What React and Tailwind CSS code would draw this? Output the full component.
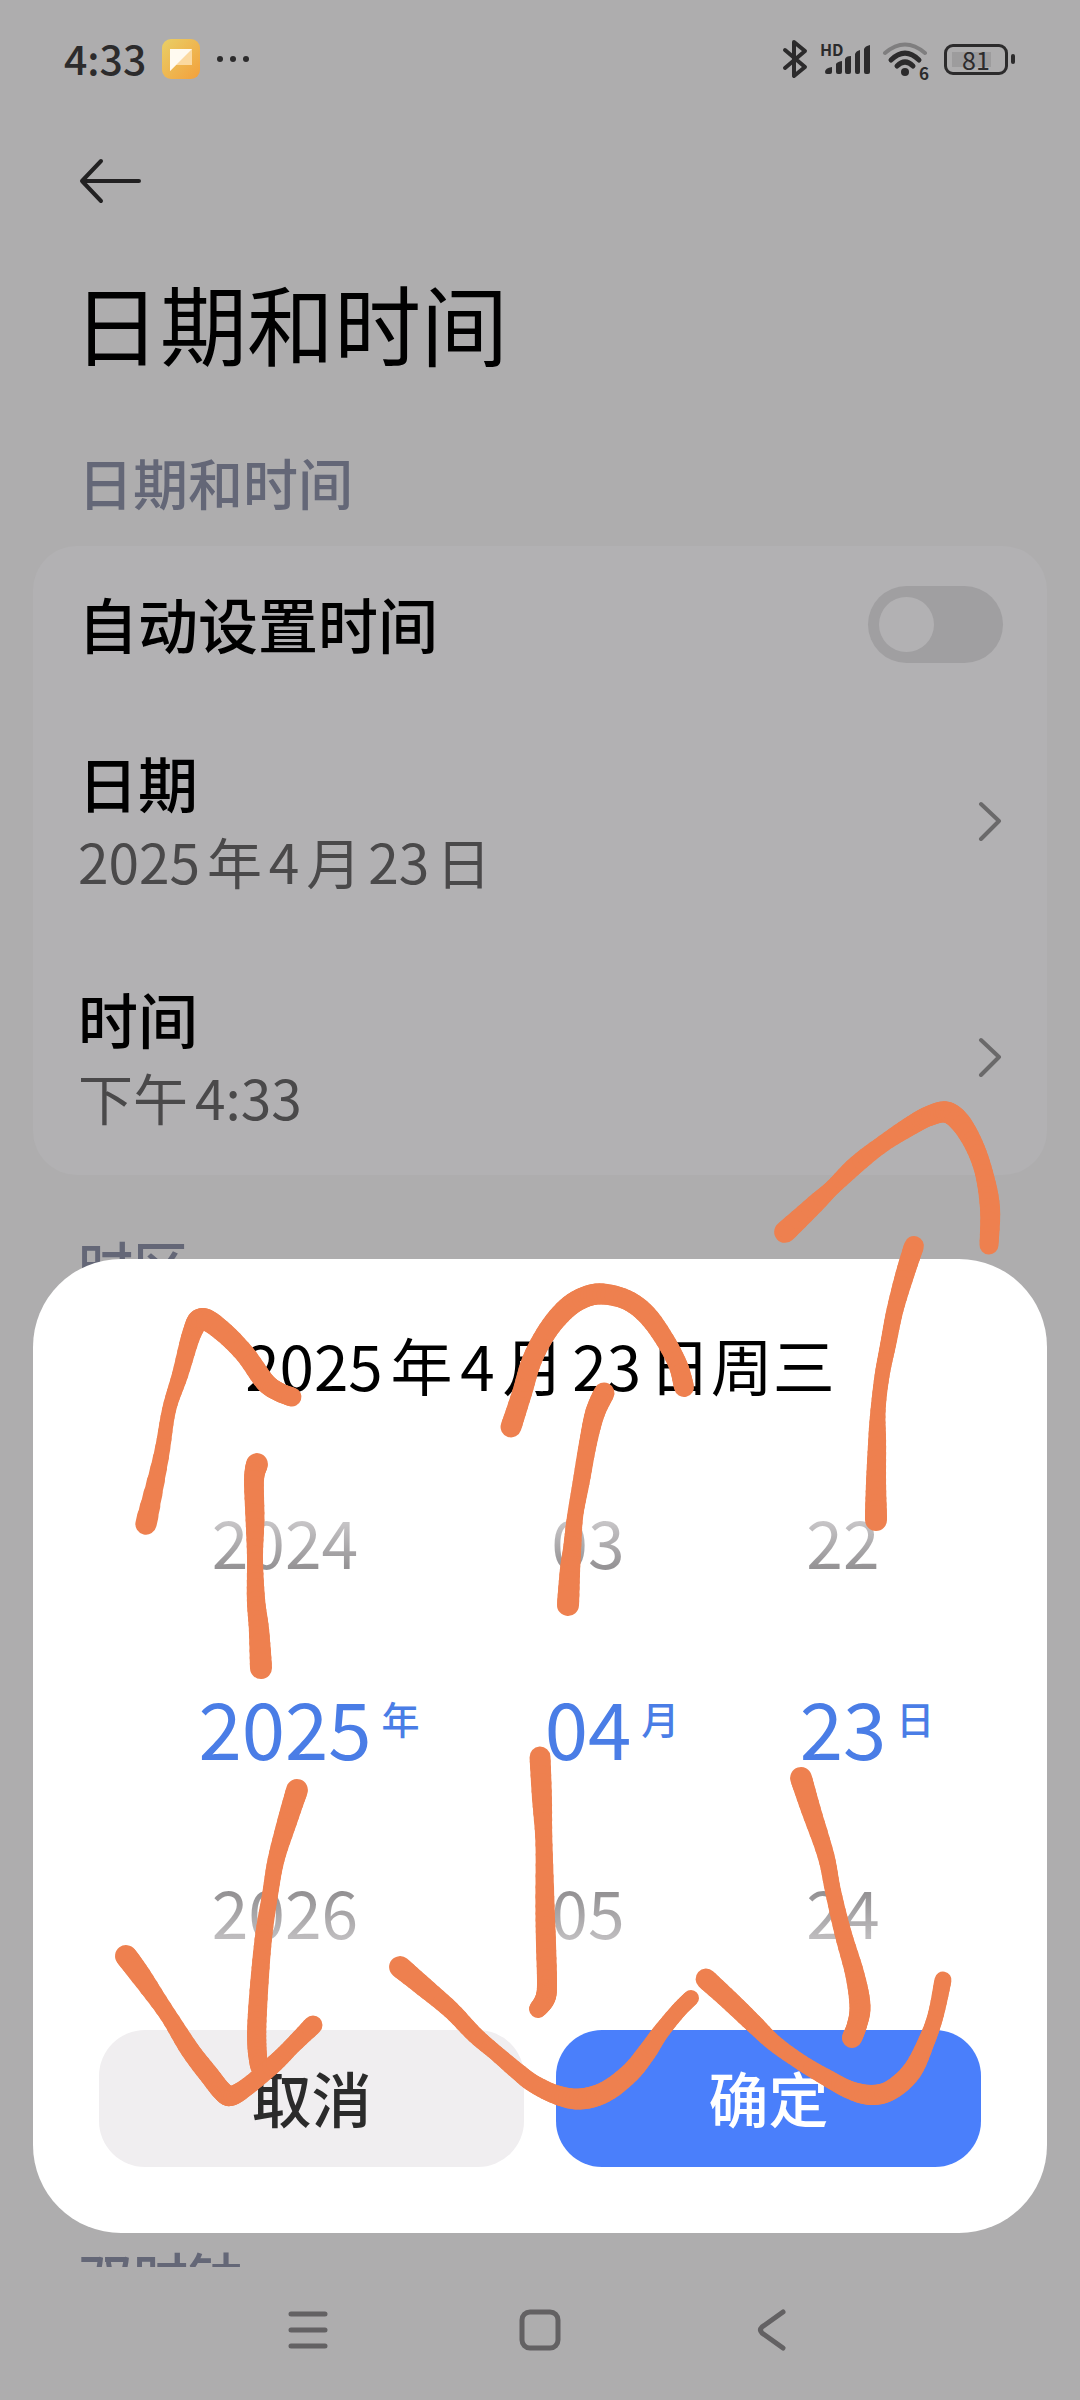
import React, { useState } from 'react';

const WEEKDAYS = ['日', '一', '二', '三', '四', '五', '六'];

// Hand-drawn swipe hints, each point is [x, y, pen width]
const PEN_STROKES = [
    [[146, 1524, 22], [161, 1457, 16], [169, 1410, 14], [180, 1375, 16], [192, 1333, 19], [202, 1319, 22], [221, 1330, 21], [245, 1354, 20], [265, 1382, 20], [279, 1392, 19], [292, 1397, 19]],
    [[257, 1464, 22], [254, 1480, 20], [255, 1520, 19], [255, 1560, 16], [256, 1600, 18], [259, 1630, 20], [261, 1668, 22]],
    [[511, 1427, 21], [522, 1393, 20], [532, 1360, 20], [548, 1330, 20], [567, 1308, 21], [585, 1297, 21], [603, 1294, 21], [627, 1300, 20], [647, 1315, 20], [665, 1340, 19], [678, 1365, 19], [684, 1387, 20]],
    [[604, 1393, 21], [595, 1413, 20], [588, 1443, 18], [581, 1483, 17], [575, 1517, 16], [572, 1550, 18], [570, 1570, 20], [568, 1605, 22]],
    [[785, 1232, 22], [815, 1204, 19], [833, 1187, 16], [857, 1164, 18], [884, 1143, 17], [912, 1125, 19], [929, 1116, 20], [946, 1112, 21], [960, 1122, 21], [974, 1145, 19], [984, 1173, 18], [990, 1208, 20], [989, 1245, 19]],
    [[914, 1246, 20], [905, 1274, 19], [895, 1310, 17], [888, 1345, 16], [882, 1376, 15], [878, 1411, 15], [877, 1446, 18], [876, 1485, 20], [876, 1520, 22]],
    [[297, 1790, 22], [287, 1822, 20], [276, 1860, 17], [270, 1895, 16], [264, 1933, 17], [260, 1975, 18], [257, 2021, 19], [257, 2048, 19], [259, 2066, 18]],
    [[126, 1956, 22], [141, 1976, 21], [168, 2015, 17], [190, 2050, 19], [210, 2076, 20], [222, 2091, 20], [231, 2096, 20], [248, 2086, 18], [275, 2063, 18], [293, 2045, 17], [313, 2025, 19]],
    [[540, 1757, 21], [542, 1799, 20], [544, 1845, 17], [545, 1906, 19], [546, 1944, 20], [547, 1985, 20], [545, 1999, 20], [538, 2009, 18]],
    [[400, 1967, 22], [424, 1987, 20], [451, 2010, 18], [475, 2035, 17], [496, 2053, 16], [517, 2071, 17], [534, 2084, 18], [557, 2095, 19], [580, 2099, 21], [605, 2092, 21], [630, 2073, 20], [647, 2052, 19], [660, 2033, 17], [678, 2011, 16], [691, 1998, 16]],
    [[801, 1778, 22], [811, 1810, 20], [826, 1856, 17], [833, 1891, 16], [843, 1933, 17], [855, 1975, 19], [860, 2006, 21], [857, 2025, 20], [852, 2038, 20]],
    [[706, 1979, 21], [729, 2000, 20], [753, 2023, 19], [774, 2043, 17], [802, 2063, 16], [829, 2079, 17], [850, 2090, 18], [871, 2095, 20], [891, 2090, 20], [912, 2071, 20], [927, 2040, 17], [936, 2014, 16], [943, 1980, 17]],
];

// Catmull-Rom through the points so that both path and width stay smooth
function smooth(points, steps = 6) {
    const out = [];
    for (let i = 0; i < points.length - 1; i++) {
        const p0 = points[i - 1] || points[i];
        const p1 = points[i];
        const p2 = points[i + 1];
        const p3 = points[i + 2] || p2;
        for (let s = 0; s < steps; s++) {
            const t = s / steps;
            out.push(p1.map((_, k) =>
                0.5 * (2 * p1[k] + (p2[k] - p0[k]) * t +
                    (2 * p0[k] - 5 * p1[k] + 4 * p2[k] - p3[k]) * t * t +
                    (3 * p1[k] - p0[k] - 3 * p2[k] + p3[k]) * t * t * t)
            ));
        }
    }
    out.push(points[points.length - 1]);
    return out;
}

function PenStrokes() {
    return (
        <svg
            viewBox="0 0 1080 2400"
            className="absolute inset-0 w-full h-full pointer-events-none"
            stroke="#ee804f"
            strokeLinecap="round"
            aria-hidden="true"
        >
            {PEN_STROKES.map((points, i) => {
                const path = smooth(points);
                return (
                    <g key={i}>
                        {path.slice(1).map(([x, y, w], j) => (
                            <line key={j} x1={path[j][0]} y1={path[j][1]} x2={x} y2={y} strokeWidth={w} />
                        ))}
                    </g>
                );
            })}
        </svg>
    );
}

function StatusBar() {
    return (
        <header className="h-[118px] shrink-0 pl-16 pr-[65px] flex items-center justify-between text-[#2c2b2c]">
            <div className="flex items-center">
                <span className="pb-1 text-[41px] leading-none font-medium">4:33</span>
                <svg width="38" height="40" viewBox="0 0 38 40" className="ml-4">
                    <defs>
                        <linearGradient id="note" x1="0" y1="0" x2="1" y2="1">
                            <stop offset="0" stopColor="#e9cf66" />
                            <stop offset="1" stopColor="#f3a03c" />
                        </linearGradient>
                    </defs>
                    <rect width="38" height="40" rx="9" fill="url(#note)" />
                    <path d="M8 10H30V26H14L8 32Z" fill="#fbd9a0" />
                    <path d="M8 10H30L8 32Z" fill="#fffaf0" />
                </svg>
                <svg width="34" height="8" viewBox="0 0 34 8" className="ml-4" fill="currentColor">
                    <circle cx="4" cy="4" r="3" />
                    <circle cx="17" cy="4" r="3" />
                    <circle cx="30" cy="4" r="3" />
                </svg>
            </div>
            <div className="flex items-center gap-3">
                <svg width="26" height="40" viewBox="0 0 26 40" fill="none" stroke="currentColor" strokeWidth="4" strokeLinecap="round" strokeLinejoin="round">
                    <path d="M3 11L23 28L12 37V3L23 12L3 29" />
                </svg>
                <div className="relative">
                    <svg width="50" height="36" viewBox="0 0 50 36" fill="currentColor">
                        <path d="M5 31Q5 27 12 26V31Q12 33 10 33H7Q5 33 5 31Z" />
                        <path d="M16 23Q17 21 22 20V31Q22 33 20 33H18Q16 33 16 31Z" />
                        <path d="M25 18Q26 15 31 15V31Q31 33 29 33H27Q25 33 25 31Z" />
                        <path d="M35 13Q36 10 40 9V31Q40 33 38 33H37Q35 33 35 31Z" />
                        <path d="M44 8Q45 5 50 4V31Q50 33 48 33H46Q44 33 44 31Z" />
                    </svg>
                    <span className="absolute left-0 top-0 text-[16px] leading-none font-bold">HD</span>
                </div>
                <div className="relative mr-[3px]">
                    <svg width="47" height="36" viewBox="0 0 47 36" fill="none" stroke="currentColor" strokeWidth="5" strokeLinecap="round">
                        <path d="M3 12Q23 -5 43 12" stroke="#7f7e7f" strokeWidth="4" />
                        <path d="M9 19Q23 5 37 19" />
                        <path d="M15 25Q23 17 31 25" />
                        <circle cx="23" cy="31" r="4" fill="currentColor" stroke="none" />
                    </svg>
                    <span className="absolute right-0 -bottom-1 text-[17px] leading-none font-bold">6</span>
                </div>
                <div className="flex items-center gap-[3px]">
                    <div className="w-16 h-[31px] rounded-[9px] border-3 border-current p-[5px]">
                        <div className="h-full flex items-center justify-center bg-linear-to-r from-[#9d9c9d] from-81% to-transparent to-81% text-[25px] leading-none">
                            81
                        </div>
                    </div>
                    <div className="w-1 h-[10px] rounded-sm bg-current" />
                </div>
            </div>
        </header>
    );
}

function SectionLabel({ children }) {
    return (
        <h2 className="pt-6 pl-[45px] text-[55px] leading-[130px] text-[#646777] font-medium">{children}</h2>
    );
}

function LinkRow({ title, value }) {
    return (
        <button type="button" className="w-full h-[236px] pl-[45px] pr-11 flex items-center justify-between text-left">
            <span>
                <span className="block text-[60px] leading-[79px] font-medium text-black">{title}</span>
                <span className="block text-[55px] leading-[79px] text-[#4a494a]">{value}</span>
            </span>
            <svg width="25" height="40" viewBox="0 0 25 40" fill="none" stroke="#6a696a" strokeWidth="4" strokeLinecap="round" strokeLinejoin="round">
                <path d="M3 3L21 20L3 38" />
            </svg>
        </button>
    );
}

function Wheel({ label, unit, value, format, onStep }) {
    return (
        <div role="group" aria-label={label} className="flex flex-col items-center">
            <button
                type="button"
                onClick={() => onStep(-1)}
                className="h-[185px] text-[66px] leading-[92px] bg-linear-to-b from-[#c8c6c8] from-40% to-[#959395] to-65% bg-clip-text text-transparent"
            >
                {format(value - 1)}
            </button>
            <div className="relative h-[185px] pt-1 flex items-center text-[78px] text-[#4a7de6]">
                {format(value)}
                <span className="absolute left-full top-12 ml-2.5 text-[38px] leading-[76px] font-medium">{unit}</span>
            </div>
            <button
                type="button"
                onClick={() => onStep(1)}
                className="h-[185px] text-[66px] leading-[92px] bg-linear-to-b from-[#929092] from-40% to-[#bebcbe] to-65% bg-clip-text text-transparent"
            >
                {format(value + 1)}
            </button>
        </div>
    );
}

function DateDialog() {
    const [date, setDate] = useState({ year: 2025, month: 4, day: 23 });

    const step = (key) => (delta) => setDate((d) => ({ ...d, [key]: d[key] + delta }));
    const pad = (max) => (n) => String(((n - 1 + max) % max) + 1).padStart(2, '0');

    const weekday = WEEKDAYS[new Date(date.year, date.month - 1, date.day).getDay()];
    const daysInMonth = new Date(date.year, date.month, 0).getDate();

    return (
        <div
            role="dialog"
            aria-labelledby="dialog-title"
            className="absolute inset-x-[33px] bottom-[167px] px-[66px] pb-[66px] bg-white rounded-[88px]"
        >
            <h2 id="dialog-title" className="pt-[55px] text-center text-[62px] leading-[100px] text-black">
                {date.year}年{date.month}月{date.day}日周{weekday}
            </h2>
            <div className="pt-[33px] pb-7 grid grid-cols-[372fr_234fr_276fr]">
                <Wheel label="年" unit="年" value={date.year} format={String} onStep={step('year')} />
                <Wheel label="月" unit="月" value={date.month} format={pad(12)} onStep={step('month')} />
                <Wheel label="日" unit="日" value={date.day} format={pad(daysInMonth)} onStep={step('day')} />
            </div>
            <div className="grid grid-cols-2 gap-8">
                <button type="button" className="h-[137px] pb-1 rounded-[46px] bg-[#f0eef0] text-[60px] font-medium text-[#2b2b2b]">
                    取消
                </button>
                <button type="button" className="h-[137px] pb-1 rounded-[46px] bg-[#4a7ffb] text-[60px] font-medium text-white">
                    确定
                </button>
            </div>
        </div>
    );
}

function NavBar() {
    return (
        <nav className="h-[133px] shrink-0 pb-2 flex items-center justify-center gap-[190px] text-[#636163]">
            <button type="button" aria-label="最近任务">
                <svg width="42" height="42" viewBox="0 0 42 42" stroke="currentColor" strokeWidth="5" strokeLinecap="round">
                    <path d="M4 5H38M4 21H38M4 37H38" />
                </svg>
            </button>
            <button type="button" aria-label="主屏幕">
                <svg width="42" height="42" viewBox="0 0 42 42" fill="none" stroke="currentColor" strokeWidth="5">
                    <rect x="3" y="3" width="36" height="36" rx="8" />
                </svg>
            </button>
            <button type="button" aria-label="返回">
                <svg width="42" height="42" viewBox="0 0 42 42" fill="none" stroke="currentColor" strokeWidth="5" strokeLinecap="round">
                    <path d="M32 3L11 18Q8 21 11 24L32 39" />
                </svg>
            </button>
        </nav>
    );
}

export default function App() {
    const [autoTime, setAutoTime] = useState(false);

    return (
        <div className="relative h-screen flex flex-col overflow-hidden bg-[#aeadae] font-['Noto_Sans_CJK_SC',sans-serif] [text-autospace:normal]">
            <StatusBar />
            <main className="flex-1 min-h-0 overflow-hidden px-[33px]">
                <div className="h-[126px] pl-[46px] flex items-center">
                    <button type="button" aria-label="返回">
                        <svg width="62" height="46" viewBox="0 0 62 46" fill="none" stroke="#222122" strokeWidth="4" strokeLinecap="round" strokeLinejoin="round">
                            <path d="M22 3L3 23L22 43M3 23H60" />
                        </svg>
                    </button>
                </div>
                <h1 className="pt-2 pl-10 text-[87px] leading-[140px] text-black">日期和时间</h1>

                <SectionLabel>日期和时间</SectionLabel>
                <section className="rounded-[44px] bg-[#b2b1b3]">
                    <div className="h-[157px] pl-[45px] pr-11 flex items-center justify-between">
                        <label htmlFor="auto-time" className="pb-1 text-[60px] font-medium text-black">自动设置时间</label>
                        <input
                            id="auto-time"
                            type="checkbox"
                            role="switch"
                            checked={autoTime}
                            onChange={(e) => setAutoTime(e.target.checked)}
                            className="appearance-none w-[135px] h-[77px] rounded-full bg-[#a09fa1] px-[11px] flex items-center checked:justify-end checked:bg-[#4a7ffb] before:content-[''] before:size-[55px] before:rounded-full before:bg-[#b2b1b3]"
                        />
                    </div>
                    <LinkRow title="日期" value="2025年4月23日" />
                    <LinkRow title="时间" value="下午4:33" />
                </section>

                <SectionLabel>时区</SectionLabel>
                <section className="h-[857px] rounded-[44px] bg-[#b2b1b3]" />

                <SectionLabel>双时钟</SectionLabel>
            </main>
            <NavBar />
            <DateDialog />
            <PenStrokes />
        </div>
    );
}
